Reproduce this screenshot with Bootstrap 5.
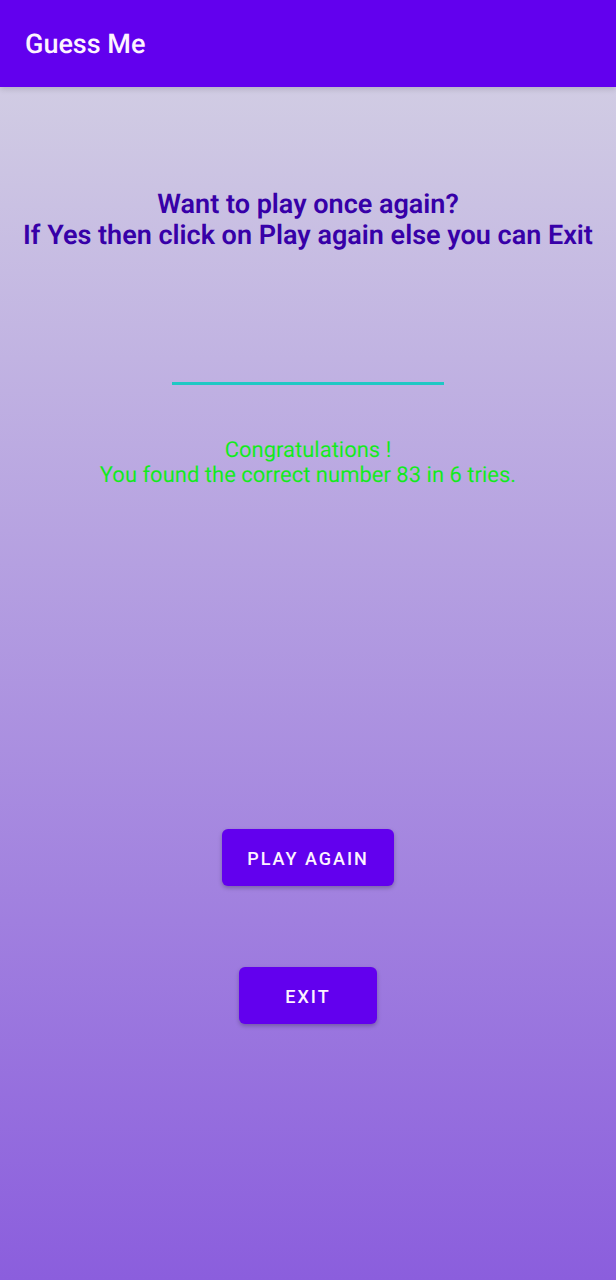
<!DOCTYPE html>
<html lang="en">
<head>
<meta charset="utf-8">
<meta name="viewport" content="width=device-width, initial-scale=1">
<title>Guess Me</title>
<link href="https://cdn.jsdelivr.net/npm/bootstrap@5.3.0/dist/css/bootstrap.min.css" rel="stylesheet">
<style>
body { font-family: Roboto, sans-serif; text-rendering: geometricPrecision; background: linear-gradient(#d6d4e4, #8b5edd) fixed; }
.app-bar { background: #6200ee; padding: 24px 25px 23px; box-shadow: 0 2px 6px rgba(0,0,0,.15); }
.app-title { font-size: 27px; line-height: 40px; font-weight: 500; color: #fdf3ff; }
.prompt { font-size: 27px; line-height: 31px; font-weight: 600; color: #3700a8; margin-top: 102px; }
.guess { width: 272px; height: 56px; margin-top: 78px; font-size: 27px; background: transparent; border: 0; border-bottom: 3px solid #1fc8c4; border-radius: 0; outline: 0; }
.result { font-size: 22px; line-height: 25px; color: #14ea1e; margin-top: 53px; }
.action { font-size: 18px; line-height: 29px; font-weight: 500; letter-spacing: 2px; padding: 15px 25px 13px; min-width: 138px; border: 0; border-radius: 6px; background: #6200ee; color: #fdf3ff; box-shadow: 0 2px 4px rgba(0,0,0,.25); }
.action:hover { background: #3700b3; color: #fff; }
.actions { margin-top: 341px; gap: 81px; }
</style>
</head>
<body class="min-vh-100">
<header class="app-bar"><h1 class="app-title m-0">Guess Me</h1></header>
<main class="d-flex flex-column align-items-center text-center">
<h2 class="prompt mb-0">Want to play once again?<br>If Yes then click on Play again else you can Exit</h2>
<input class="guess text-center" type="text" inputmode="numeric" aria-label="Your guess">
<p class="result mb-0">Congratulations !<br>You found the correct number 83 in 6 tries.</p>
<div class="actions d-flex flex-column align-items-center">
<button type="button" class="btn action">PLAY AGAIN</button>
<button type="button" class="btn action">EXIT</button>
</div>
</main>
<script src="https://cdn.jsdelivr.net/npm/bootstrap@5.3.0/dist/js/bootstrap.bundle.min.js"></script>
</body>
</html>
